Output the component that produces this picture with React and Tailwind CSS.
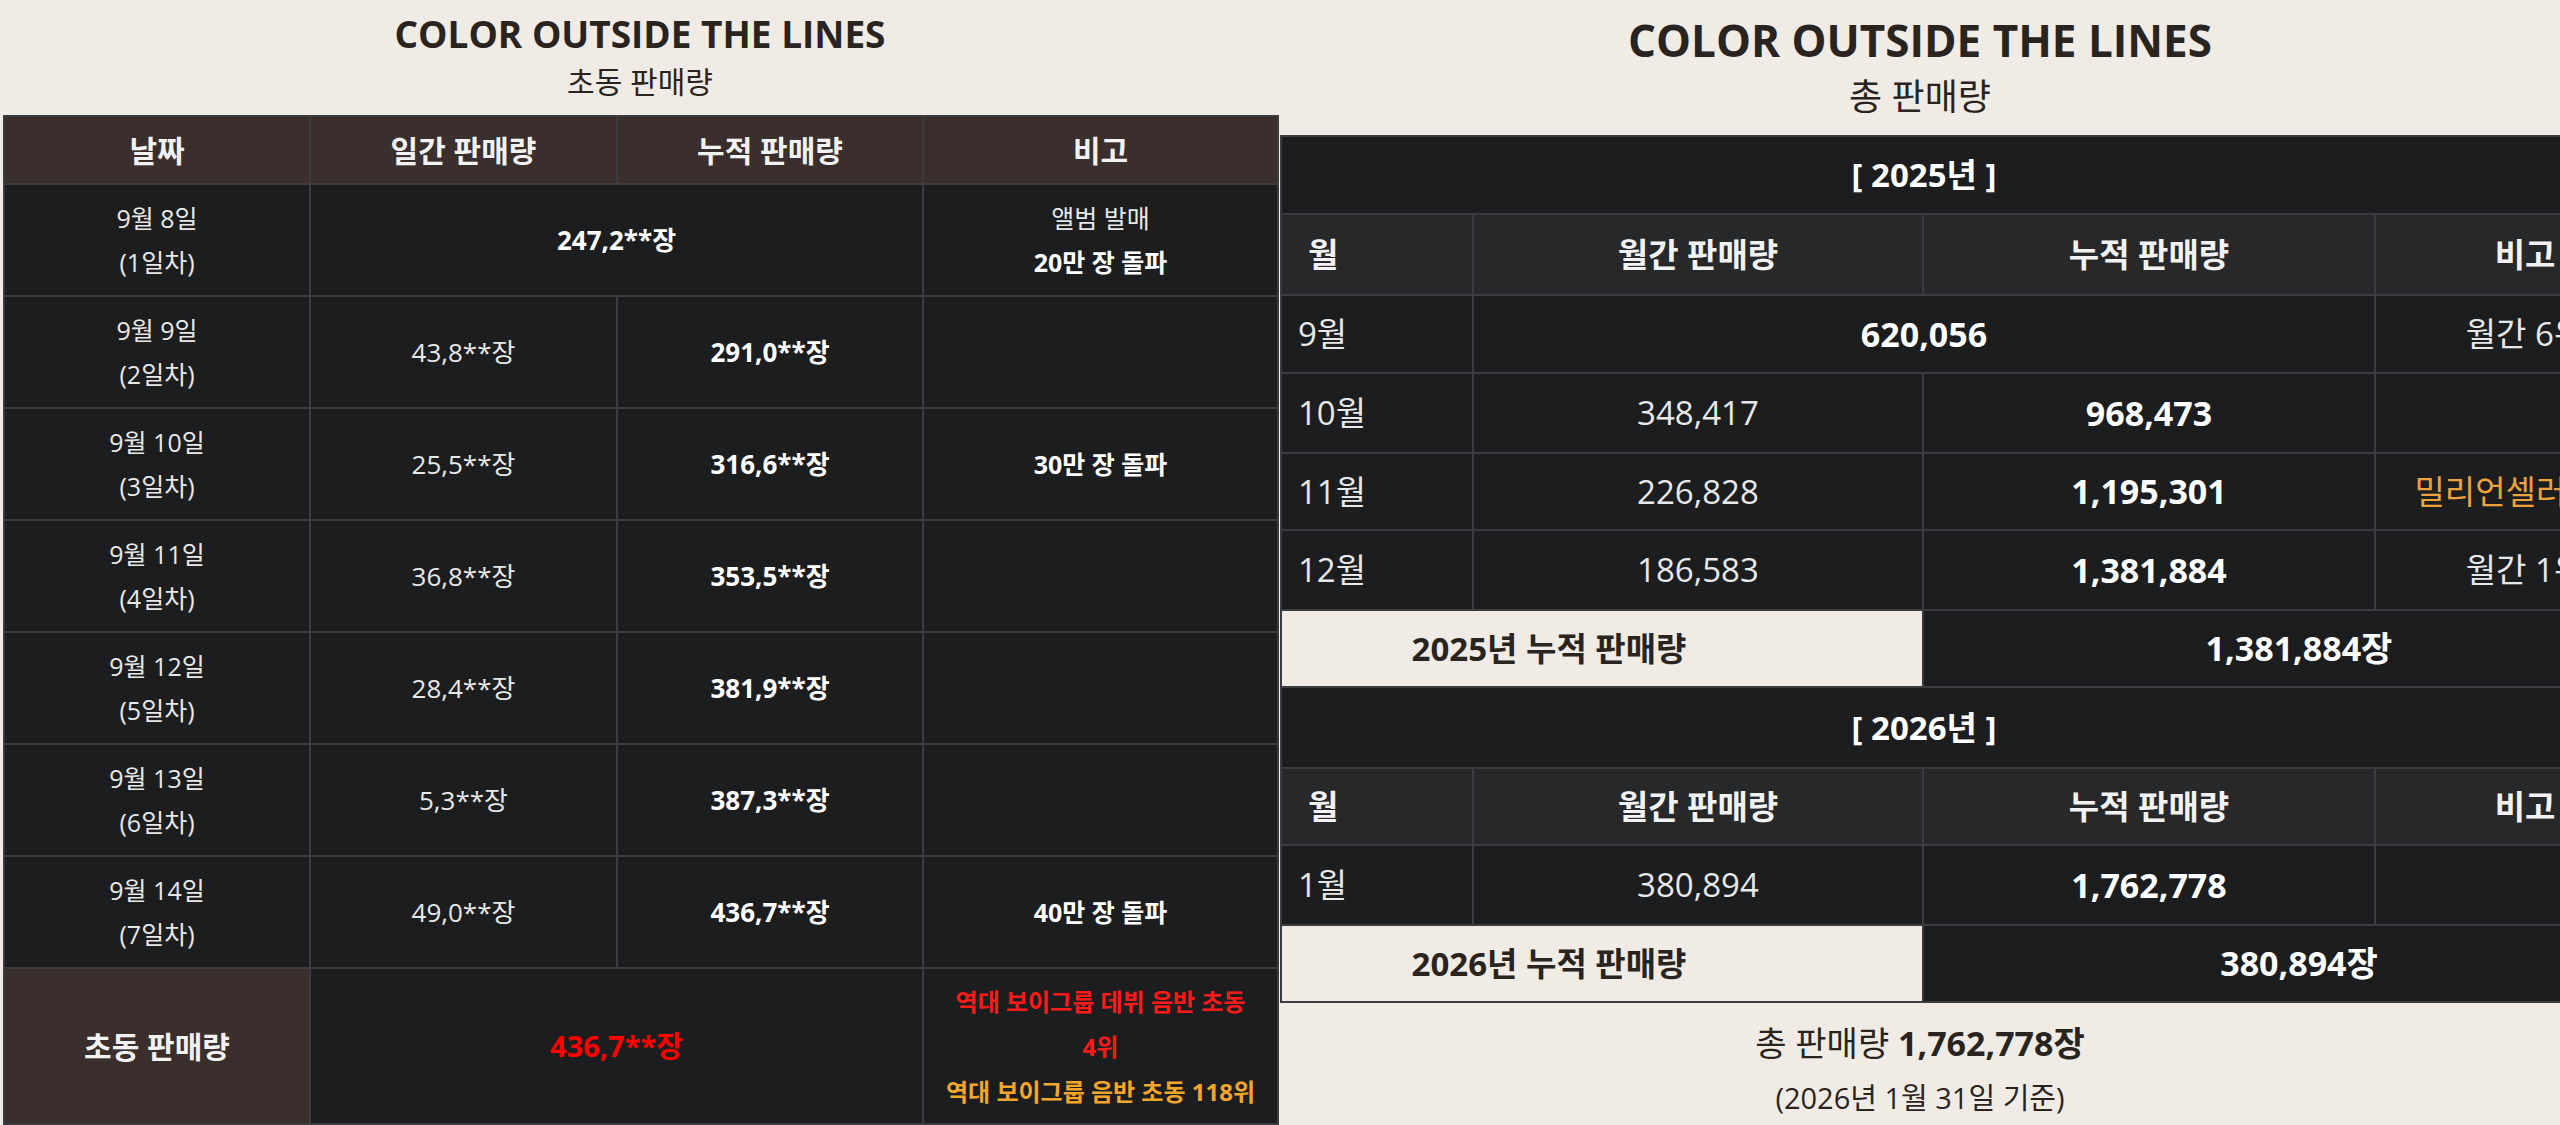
import React from 'react'

const days = [
  { date: '9월 8일', nth: '(1일차)', total: '247,2**장', note: ['앨범 발매', '20만 장 돌파'] },
  { date: '9월 9일', nth: '(2일차)', daily: '43,8**장', cum: '291,0**장' },
  { date: '9월 10일', nth: '(3일차)', daily: '25,5**장', cum: '316,6**장', note: [null, '30만 장 돌파'] },
  { date: '9월 11일', nth: '(4일차)', daily: '36,8**장', cum: '353,5**장' },
  { date: '9월 12일', nth: '(5일차)', daily: '28,4**장', cum: '381,9**장' },
  { date: '9월 13일', nth: '(6일차)', daily: '5,3**장', cum: '387,3**장' },
  { date: '9월 14일', nth: '(7일차)', daily: '49,0**장', cum: '436,7**장', note: [null, '40만 장 돌파'] },
]

const months2025 = [
  { m: '9월', total: '620,056', note: '월간 6위' },
  { m: '10월', monthly: '348,417', cum: '968,473', note: '' },
  { m: '11월', monthly: '226,828', cum: '1,195,301', note: '밀리언셀러 달성', orange: true },
  { m: '12월', monthly: '186,583', cum: '1,381,884', note: '월간 1위' },
]

const cell = 'bg-[#1c1d1f] flex flex-col items-center justify-center text-center'

function FirstWeek() {
  return (
    <div className="w-[1280px] shrink-0 flex flex-col">
      <div className="h-[115px] flex flex-col items-center text-[#2a2421]">
        <div className="mt-[10px] h-[48px] leading-[48px] text-[37px] font-bold">COLOR OUTSIDE THE LINES</div>
        <div className="h-[48px] leading-[48px] text-[30px]">초동 판매량</div>
      </div>
      <div className="ml-[3px] w-[1276px] grid grid-cols-[304px_305px_304px_353px] grid-rows-[66px_repeat(7,110px)_154px] gap-[2px] p-[2px] bg-[#3b3c3f] text-[#e8e8e8]">
        {['날짜', '일간 판매량', '누적 판매량', '비고'].map(h => (
          <div key={h} className="bg-[#3a2f2c] flex items-center justify-center text-[30px] font-bold text-[#f2f2f2]">{h}</div>
        ))}
        {days.map(d => (
          <React.Fragment key={d.date}>
            <div className={`${cell} text-[25px] leading-[44px]`}>
              <div>{d.date}</div>
              <div>{d.nth}</div>
            </div>
            {d.total ? (
              <div className={`${cell} col-span-2 text-[26px] font-bold text-white`}>{d.total}</div>
            ) : (
              <>
                <div className={`${cell} text-[26px]`}>{d.daily}</div>
                <div className={`${cell} text-[26px] font-bold text-white`}>{d.cum}</div>
              </>
            )}
            <div className={`${cell} text-[25px] leading-[44px]`}>
              {d.note && d.note[0] && <div>{d.note[0]}</div>}
              {d.note && <div className="font-bold text-white">{d.note[1]}</div>}
            </div>
          </React.Fragment>
        ))}
        <div className="bg-[#3a2f2c] flex items-center justify-center text-[30px] font-bold text-[#f2f2f2]">초동 판매량</div>
        <div className={`${cell} col-span-2 text-[29px] font-bold text-[#ff0000]`}>436,7**장</div>
        <div className={`${cell} text-[24px] leading-[45px] font-bold whitespace-nowrap`}>
          <div className="text-[#ff1a1a]">역대 보이그룹 데뷔 음반 초동</div>
          <div className="text-[#ff1a1a]">4위</div>
          <div className="text-[#f4a62a]">역대 보이그룹 음반 초동 118위</div>
        </div>
      </div>
    </div>
  )
}

function ColHeads() {
  return (
    <>
      <div className="bg-[#26282a] flex items-center pl-[26px] text-[33px] font-bold text-[#f2f2f2]">월</div>
      <div className="bg-[#26282a] flex items-center justify-center text-[33px] font-bold text-[#f2f2f2]">월간 판매량</div>
      <div className="bg-[#26282a] flex items-center justify-center text-[33px] font-bold text-[#f2f2f2]">누적 판매량</div>
      <div className="bg-[#26282a] flex items-center justify-center text-[33px] font-bold text-[#f2f2f2]">비고</div>
    </>
  )
}

function MonthRow({ r }) {
  return (
    <>
      <div className="bg-[#1c1d1f] flex items-center pl-[16px] text-[33px]">{r.m}</div>
      {r.total ? (
        <div className="bg-[#1c1d1f] col-span-2 flex items-center justify-center text-[34px] font-bold text-white">{r.total}</div>
      ) : (
        <>
          <div className="bg-[#1c1d1f] flex items-center justify-center text-[33px]">{r.monthly}</div>
          <div className="bg-[#1c1d1f] flex items-center justify-center text-[34px] font-bold text-white">{r.cum}</div>
        </>
      )}
      <div className={`bg-[#1c1d1f] flex items-center justify-center whitespace-nowrap text-[33px] ${r.orange ? 'text-[#eda33b]' : ''}`}>{r.note}</div>
    </>
  )
}

function TotalSales() {
  return (
    <div className="w-[1280px] shrink-0 overflow-hidden flex flex-col">
      <div className="h-[135px] flex flex-col items-center text-[#2a2421]">
        <div className="mt-[12px] h-[56px] leading-[56px] text-[44px] font-bold">COLOR OUTSIDE THE LINES</div>
        <div className="h-[58px] leading-[58px] text-[36px]">총 판매량</div>
      </div>
      <div className="w-[1396px] shrink-0 grid grid-cols-[190px_448px_450px_298px] grid-rows-[76px_79px_76px_78px_75px_78px_75px_79px_75px_78px_75px] gap-[2px] p-[2px] bg-[#3b3c3f] text-[#e8e8e8]">
        <div className="bg-[#1c1d1f] col-span-4 flex items-center justify-center pr-[108px] text-[33px] font-bold text-white">[ 2025년 ]</div>
        <ColHeads />
        {months2025.map(r => <MonthRow key={r.m} r={r} />)}
        <div className="bg-[#f0ebe5] col-span-2 flex items-center justify-center pr-[106px] text-[33px] font-bold text-[#2a2421]">2025년 누적 판매량</div>
        <div className="bg-[#1c1d1f] col-span-2 flex items-center justify-center text-[34px] font-bold text-white">1,381,884장</div>
        <div className="bg-[#1c1d1f] col-span-4 flex items-center justify-center pr-[108px] text-[33px] font-bold text-white">[ 2026년 ]</div>
        <ColHeads />
        <MonthRow r={{ m: '1월', monthly: '380,894', cum: '1,762,778', note: '' }} />
        <div className="bg-[#f0ebe5] col-span-2 flex items-center justify-center pr-[106px] text-[33px] font-bold text-[#2a2421]">2026년 누적 판매량</div>
        <div className="bg-[#1c1d1f] col-span-2 flex items-center justify-center text-[34px] font-bold text-white">380,894장</div>
      </div>
      <div className="pt-[20px] flex flex-col items-center text-[#2a2421]">
        <div className="h-[40px] leading-[40px] text-[34px]">총 판매량 <span className="font-bold">1,762,778장</span></div>
        <div className="mt-[15px] h-[40px] leading-[40px] text-[29px]">(2026년 1월 31일 기준)</div>
      </div>
    </div>
  )
}

export default function App() {
  return (
    <div className="w-[2560px] h-[1125px] overflow-hidden flex bg-[#f0ebe5] font-['Open_Sans','Noto_Sans_CJK_KR',sans-serif]">
      <FirstWeek />
      <TotalSales />
    </div>
  )
}
